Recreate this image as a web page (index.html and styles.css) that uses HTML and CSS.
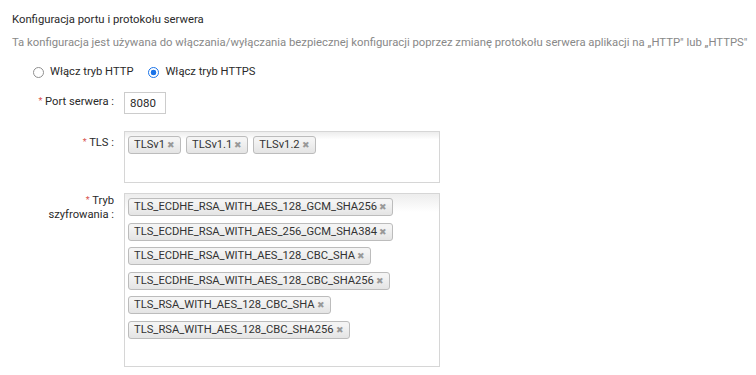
FILE: index.html
```html
<!DOCTYPE html>
<html lang="pl">
<head>
    <meta charset="UTF-8">
    <title>Konfiguracja portu</title>
    <link rel="stylesheet" href="styles.css">
</head>
<body>
    <div class="config">
        <h2 class="config-title">Konfiguracja portu i protokołu serwera</h2>
        <p class="config-desc">Ta konfiguracja jest używana do włączania/wyłączania bezpiecznej konfiguracji poprzez zmianę protokołu serwera aplikacji na „HTTP" lub „HTTPS"</p>

        <div class="radios">
            <label class="radio"><span class="radio-dot"></span>Włącz tryb HTTP</label>
            <label class="radio"><span class="radio-dot checked"></span>Włącz tryb HTTPS</label>
        </div>

        <div class="row row-port">
            <div class="label"><span class="req">*</span> Port serwera :</div>
            <div class="port-input">8080</div>
        </div>

        <div class="row row-tls">
            <div class="label"><span class="req">*</span> TLS :</div>
            <div class="multi multi-tls">
                <span class="tag">TLSv1 <i>✖</i></span>
                <span class="tag">TLSv1.1 <i>✖</i></span>
                <span class="tag">TLSv1.2 <i>✖</i></span>
            </div>
        </div>

        <div class="row row-cipher">
            <div class="label"><span class="req">*</span> Tryb<br>szyfrowania :</div>
            <div class="multi multi-cipher">
                <span class="tag">TLS_ECDHE_RSA_WITH_AES_128_GCM_SHA256 <i>✖</i></span>
                <span class="tag">TLS_ECDHE_RSA_WITH_AES_256_GCM_SHA384 <i>✖</i></span>
                <span class="tag">TLS_ECDHE_RSA_WITH_AES_128_CBC_SHA <i>✖</i></span>
                <span class="tag">TLS_ECDHE_RSA_WITH_AES_128_CBC_SHA256 <i>✖</i></span>
                <span class="tag">TLS_RSA_WITH_AES_128_CBC_SHA <i>✖</i></span>
                <span class="tag">TLS_RSA_WITH_AES_128_CBC_SHA256 <i>✖</i></span>
            </div>
        </div>
    </div>
</body>
</html>
```

FILE: styles.css
```css
/* General */
body {
    margin: 0;
    background: #fff;
    font-family: Roboto, "Liberation Sans", sans-serif;
    font-size: 11.2px;
    color: #2a2a2a;
}

.config {
    padding: 13px 0 0 12px;
}

.config-title {
    font-size: 11.3px;
    font-weight: normal;
    margin: 0;
    line-height: 14px;
    color: #2a2a2a;
}

.config-desc {
    margin: 9px 0 0;
    font-size: 11.3px;
    line-height: 14px;
    color: #888;
    white-space: nowrap;
}

/* Radios */
.radios {
    display: flex;
    gap: 15px;
    padding-left: 21px;
    margin-top: 15px;
    line-height: 14px;
}

.radio {
    display: flex;
    align-items: center;
    gap: 6px;
}

.radio-dot {
    width: 11px;
    height: 11px;
    border: 1px solid #8f8f8f;
    border-radius: 50%;
    box-sizing: border-box;
    background: #fff;
}

.radio-dot.checked {
    border-color: #1a73e8;
    background: radial-gradient(circle, #1a73e8 0 2.6px, #fff 3.1px);
}

/* Form rows */
.row {
    display: flex;
    gap: 10px;
}

.row-port {
    margin-top: 13px;
    align-items: center;
}

.row-tls {
    margin-top: 17px;
}

.row-cipher {
    margin-top: 10px;
}

.label {
    width: 102px;
    text-align: right;
    line-height: 14px;
    padding-top: 4px;
}

.row-port .label {
    padding-top: 0;
    margin-top: -4px;
}

.row-cipher .label {
    padding-top: 0;
}

.req {
    color: #d9534f;
    font-size: 9px;
    vertical-align: 1px;
}

.port-input {
    width: 42px;
    height: 22px;
    box-sizing: border-box;
    border: 1px solid #ccc;
    padding: 3px 0 0 5px;
    line-height: 14px;
    font-size: 11.5px;
}

/* Multi select */
.multi {
    width: 316px;
    box-sizing: border-box;
    border: 1px solid #d6d6d6;
    padding: 4px 3px;
    background: linear-gradient(to bottom, #eee 1%, #fff 15%);
    display: flex;
    flex-wrap: wrap;
    align-content: flex-start;
    gap: 6.6px 5px;
}

.multi-tls {
    height: 52px;
}

.multi-cipher {
    height: 174px;
    background: linear-gradient(to bottom, #eee 1px, #fff 18px);
}

.tag {
    display: inline-flex;
    align-items: center;
    height: 18px;
    box-sizing: border-box;
    padding: 0 5px 0 5px;
    border: 1px solid #bcbcbc;
    border-radius: 3px;
    background: linear-gradient(to bottom, #f4f4f4 20%, #ececec 60%, #e4e4e4);
    color: #333;
    line-height: 16px;
    white-space: nowrap;
}

.tag i {
    font-style: normal;
    font-size: 8.5px;
    color: #999;
    margin-left: 2px;
}
```
